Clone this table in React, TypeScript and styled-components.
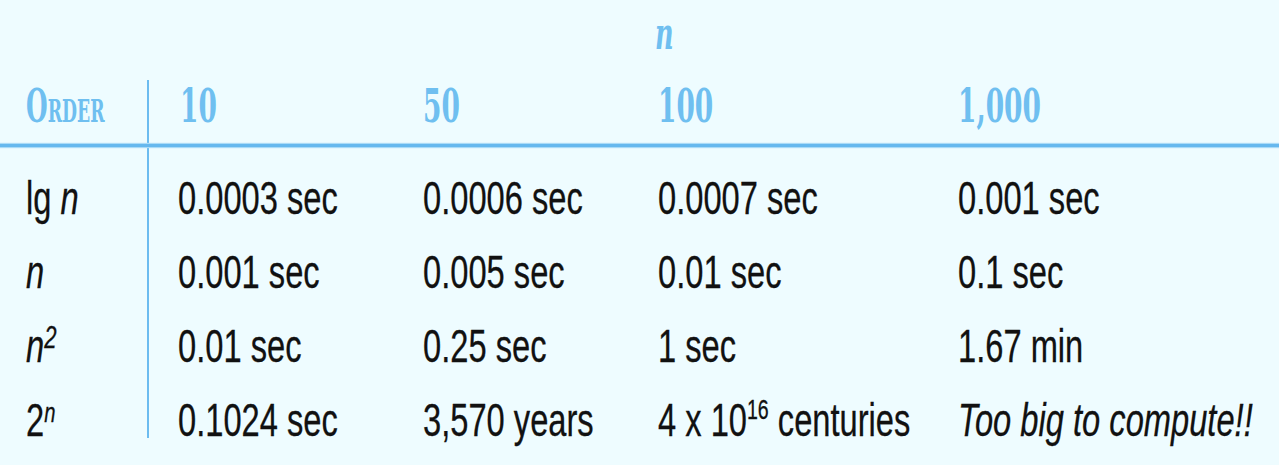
import React from 'react';
import styled, { createGlobalStyle } from 'styled-components';

const GlobalStyle = createGlobalStyle`
  html, body {
    margin: 0;
    padding: 0;
    background: #eefcff;
  }
`;

const Page = styled.div`
  width: 1279px;
  height: 465px;
  overflow: hidden;
  background: #eefcff;
`;

const Table = styled.div`
  display: grid;
  grid-template-columns: 147px 2px 274px 235px 300px 1fr;
  grid-template-rows: 80px 63px 4px 14px 74px 74px 74px 55px;
`;

const Squeeze = styled.span<{ $scale: number }>`
  display: inline-block;
  white-space: nowrap;
  transform: scaleX(${(p) => p.$scale});
  transform-origin: left center;
`;

const SizeVar = styled.div<{ $col: number }>`
  grid-row: 1;
  grid-column: ${(p) => p.$col};
  align-self: start;
  margin-left: -3px;
  font-family: 'DejaVu Serif', serif;
  font-style: italic;
  font-weight: bold;
  font-size: 44px;
  line-height: 68px;
  color: #6fbff0;
`;

const HeadCell = styled.div<{ $col: number; $pad: number }>`
  grid-row: 2;
  grid-column: ${(p) => p.$col};
  align-self: start;
  padding-left: ${(p) => p.$pad}px;
  font-family: 'DejaVu Serif Condensed', 'DejaVu Serif', serif;
  font-variant: small-caps;
  font-weight: bold;
  font-size: 46px;
  line-height: 52px;
  color: #6fbff0;
`;

const Divider = styled.div`
  grid-column: 2;
  grid-row: 2 / -1;
  width: 2px;
  background: #6cbcf0;
`;

const Rule = styled.div`
  grid-column: 1 / -1;
  grid-row: 3;
  align-self: center;
  height: 3px;
  background: #66b8ee;
  box-shadow: 0 0 1px 1px #aadbf7;
`;

const BodyCell = styled.div<{ $row: number; $col: number; $pad: number }>`
  grid-row: ${(p) => p.$row};
  grid-column: ${(p) => p.$col};
  align-self: start;
  padding-left: ${(p) => p.$pad}px;
  font-family: 'Liberation Sans', Arial, sans-serif;
  font-size: 46px;
  line-height: 74px;
  color: #111;
  -webkit-text-stroke: 0.3px #111;
`;

const Var = styled.i`
  font-style: italic;
`;

const Sup = styled.span<{ $raise: number; $size: number }>`
  font-size: ${(p) => p.$size}em;
  line-height: 0;
  vertical-align: ${(p) => p.$raise}em;
`;

type RowData = {
  label: React.ReactNode;
  cells: React.ReactNode[];
};

const rows: RowData[] = [
  {
    label: <>lg <Var>n</Var></>,
    cells: ['0.0003 sec', '0.0006 sec', '0.0007 sec', '0.001 sec'],
  },
  {
    label: <Var>n</Var>,
    cells: ['0.001 sec', '0.005 sec', '0.01 sec', '0.1 sec'],
  },
  {
    label: <><Var>n</Var><Sup $size={0.68} $raise={0.45}><Var>2</Var></Sup></>,
    cells: ['0.01 sec', '0.25 sec', '1 sec', '1.67 min'],
  },
  {
    label: <>2<Sup $size={0.62} $raise={0.5}><Var>n</Var></Sup></>,
    cells: [
      '0.1024 sec',
      '3,570 years',
      <>4 x 10<Sup $size={0.6} $raise={0.62}>16</Sup> centuries</>,
      <Var>Too big to compute!!</Var>,
    ],
  },
];

const sizes = ['10', '50', '100', '1,000'];

export default function App() {
  return (
    <Page>
      <GlobalStyle />
      <Table>
        <SizeVar $col={5}>
          <Squeeze $scale={0.58}>n</Squeeze>
        </SizeVar>

        <HeadCell $col={1} $pad={26}>
          <Squeeze $scale={0.6}>Order</Squeeze>
        </HeadCell>
        {sizes.map((s, i) => (
          <HeadCell key={s} $col={i + 3} $pad={i === 0 ? 31 : 0}>
            <Squeeze $scale={0.64}>{s}</Squeeze>
          </HeadCell>
        ))}

        <Divider />
        <Rule />

        {rows.map((r, ri) => (
          <React.Fragment key={ri}>
            <BodyCell $row={ri + 5} $col={1} $pad={26}>
              <Squeeze $scale={0.71}>{r.label}</Squeeze>
            </BodyCell>
            {r.cells.map((c, ci) => (
              <BodyCell key={ci} $row={ri + 5} $col={ci + 3} $pad={ci === 0 ? 29 : 0}>
                <Squeeze $scale={0.71}>{c}</Squeeze>
              </BodyCell>
            ))}
          </React.Fragment>
        ))}
      </Table>
    </Page>
  );
}
